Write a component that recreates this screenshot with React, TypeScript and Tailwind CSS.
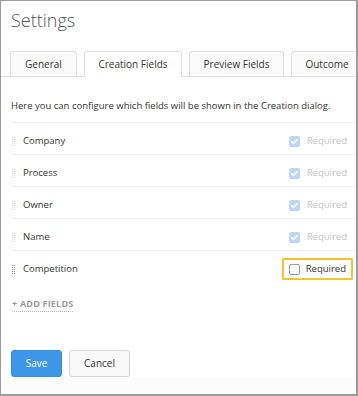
import React from 'react';

const font = { fontFamily: '"Open Sans", "Noto Sans", Arial, sans-serif' };

const tabs = [
  { label: 'General', w: 'w-[67px]' },
  { label: 'Creation Fields', w: 'w-[98px]' },
  { label: 'Preview Fields', w: 'w-[95px]' },
  { label: 'Outcome', w: 'w-[72px]' },
];

const fields = [
  { name: 'Company', locked: true },
  { name: 'Process', locked: true },
  { name: 'Owner', locked: true },
  { name: 'Name', locked: true },
  { name: 'Competition', locked: false },
];

const Grip = ({ dark }: { dark: boolean }) => (
  <div className="grid grid-cols-2 gap-[1px] w-[3px]">
    {Array.from({ length: 10 }).map((_, i) => (
      <span key={i} className={`block w-[1px] h-[1px] ${dark ? 'bg-[#9a9a9a]' : 'bg-[#d8d8d8]'}`} />
    ))}
  </div>
);

const CheckedBox = () => (
  <span className="w-[11px] h-[11px] rounded-[2px] bg-[#b9d7f5] flex items-center justify-center">
    <svg width="9" height="9" viewBox="0 0 10 10" fill="none">
      <path d="M2 5.2l2 2 4-4.4" stroke="white" strokeWidth="1.6" strokeLinecap="round" strokeLinejoin="round" />
    </svg>
  </span>
);

const App: React.FC = () => {
  return (
    <div
      className="w-[358px] h-[396px] bg-white border-t border-l border-r-2 border-b-2 border-[#9b9b9b] flex flex-col overflow-hidden"
      style={font}
    >
      <h1 className="text-[18px] font-light text-[#555] pl-[10px] pt-[6px] leading-[26px]">Settings</h1>

      <div className="flex mt-[18px] border-b border-[#dedede] pl-[9px] gap-[7px]">
        {tabs.map((t, i) => {
          const active = i === 1;
          return (
            <div
              key={t.label}
              className={`${t.w} shrink-0 h-[26px] flex items-center justify-center text-[10px] text-[#333] border border-[#dedede] rounded-t-[3px] -mb-[1px] whitespace-nowrap ${
                active ? 'bg-white border-b-white' : 'bg-[#fafafa]'
              }`}
            >
              {t.label}
            </div>
          );
        })}
      </div>

      <p className="text-[9.5px] text-[#333] pl-[10px] mt-[22px] leading-[14px] whitespace-nowrap">
        Here you can configure which fields will be shown in the Creation dialog.
      </p>

      <div className="mt-[9px] ml-[10px] mr-[2px]">
        {fields.map((f) => (
          <div key={f.name} className="h-[32px] pt-[5px] flex items-center border-t border-[#f0f0f0]">
            <div className="ml-[1px] w-[11px]">
              <Grip dark={!f.locked} />
            </div>
            <span className="text-[9.5px] text-[#333]">{f.name}</span>
            <div className="ml-auto">
              {f.locked ? (
                <div className="flex items-center gap-[7px] pr-[7px]">
                  <CheckedBox />
                  <span className="text-[9.5px] text-[#c4c4c4]">Required</span>
                </div>
              ) : (
                <div className="flex items-center gap-[6px] border-2 border-[#f4c430] rounded-[1px] h-[22px] pl-[5px] pr-[5px] mr-[1px]">
                  <span className="w-[11px] h-[11px] rounded-[2px] border border-[#999] bg-white" />
                  <span className="text-[9.5px] text-[#333]">Required</span>
                </div>
              )}
            </div>
          </div>
        ))}
      </div>

      <div className="pl-[11px] mt-[12px] leading-[14px]">
        <span className="text-[9px] font-bold text-[#9a9a9a] tracking-[0.2px] border-b border-dotted border-[#bbb] pb-[1px]">
          + ADD FIELDS
        </span>
      </div>

      <div className="flex-1" />

      <div className="flex gap-[7px] pl-[10px]">
        <button className="w-[51px] h-[27px] bg-[#3d96e8] text-white text-[10px] rounded-[3px] border border-[#3a8ee0]">
          Save
        </button>
        <button className="w-[61px] h-[27px] bg-[#f8f8f8] text-[#333] text-[10px] rounded-[3px] border border-[#d4d4d4]">
          Cancel
        </button>
      </div>
      <div className="h-[17px] bg-[#fcfcfc]" />
    </div>
  );
};

export default App;
